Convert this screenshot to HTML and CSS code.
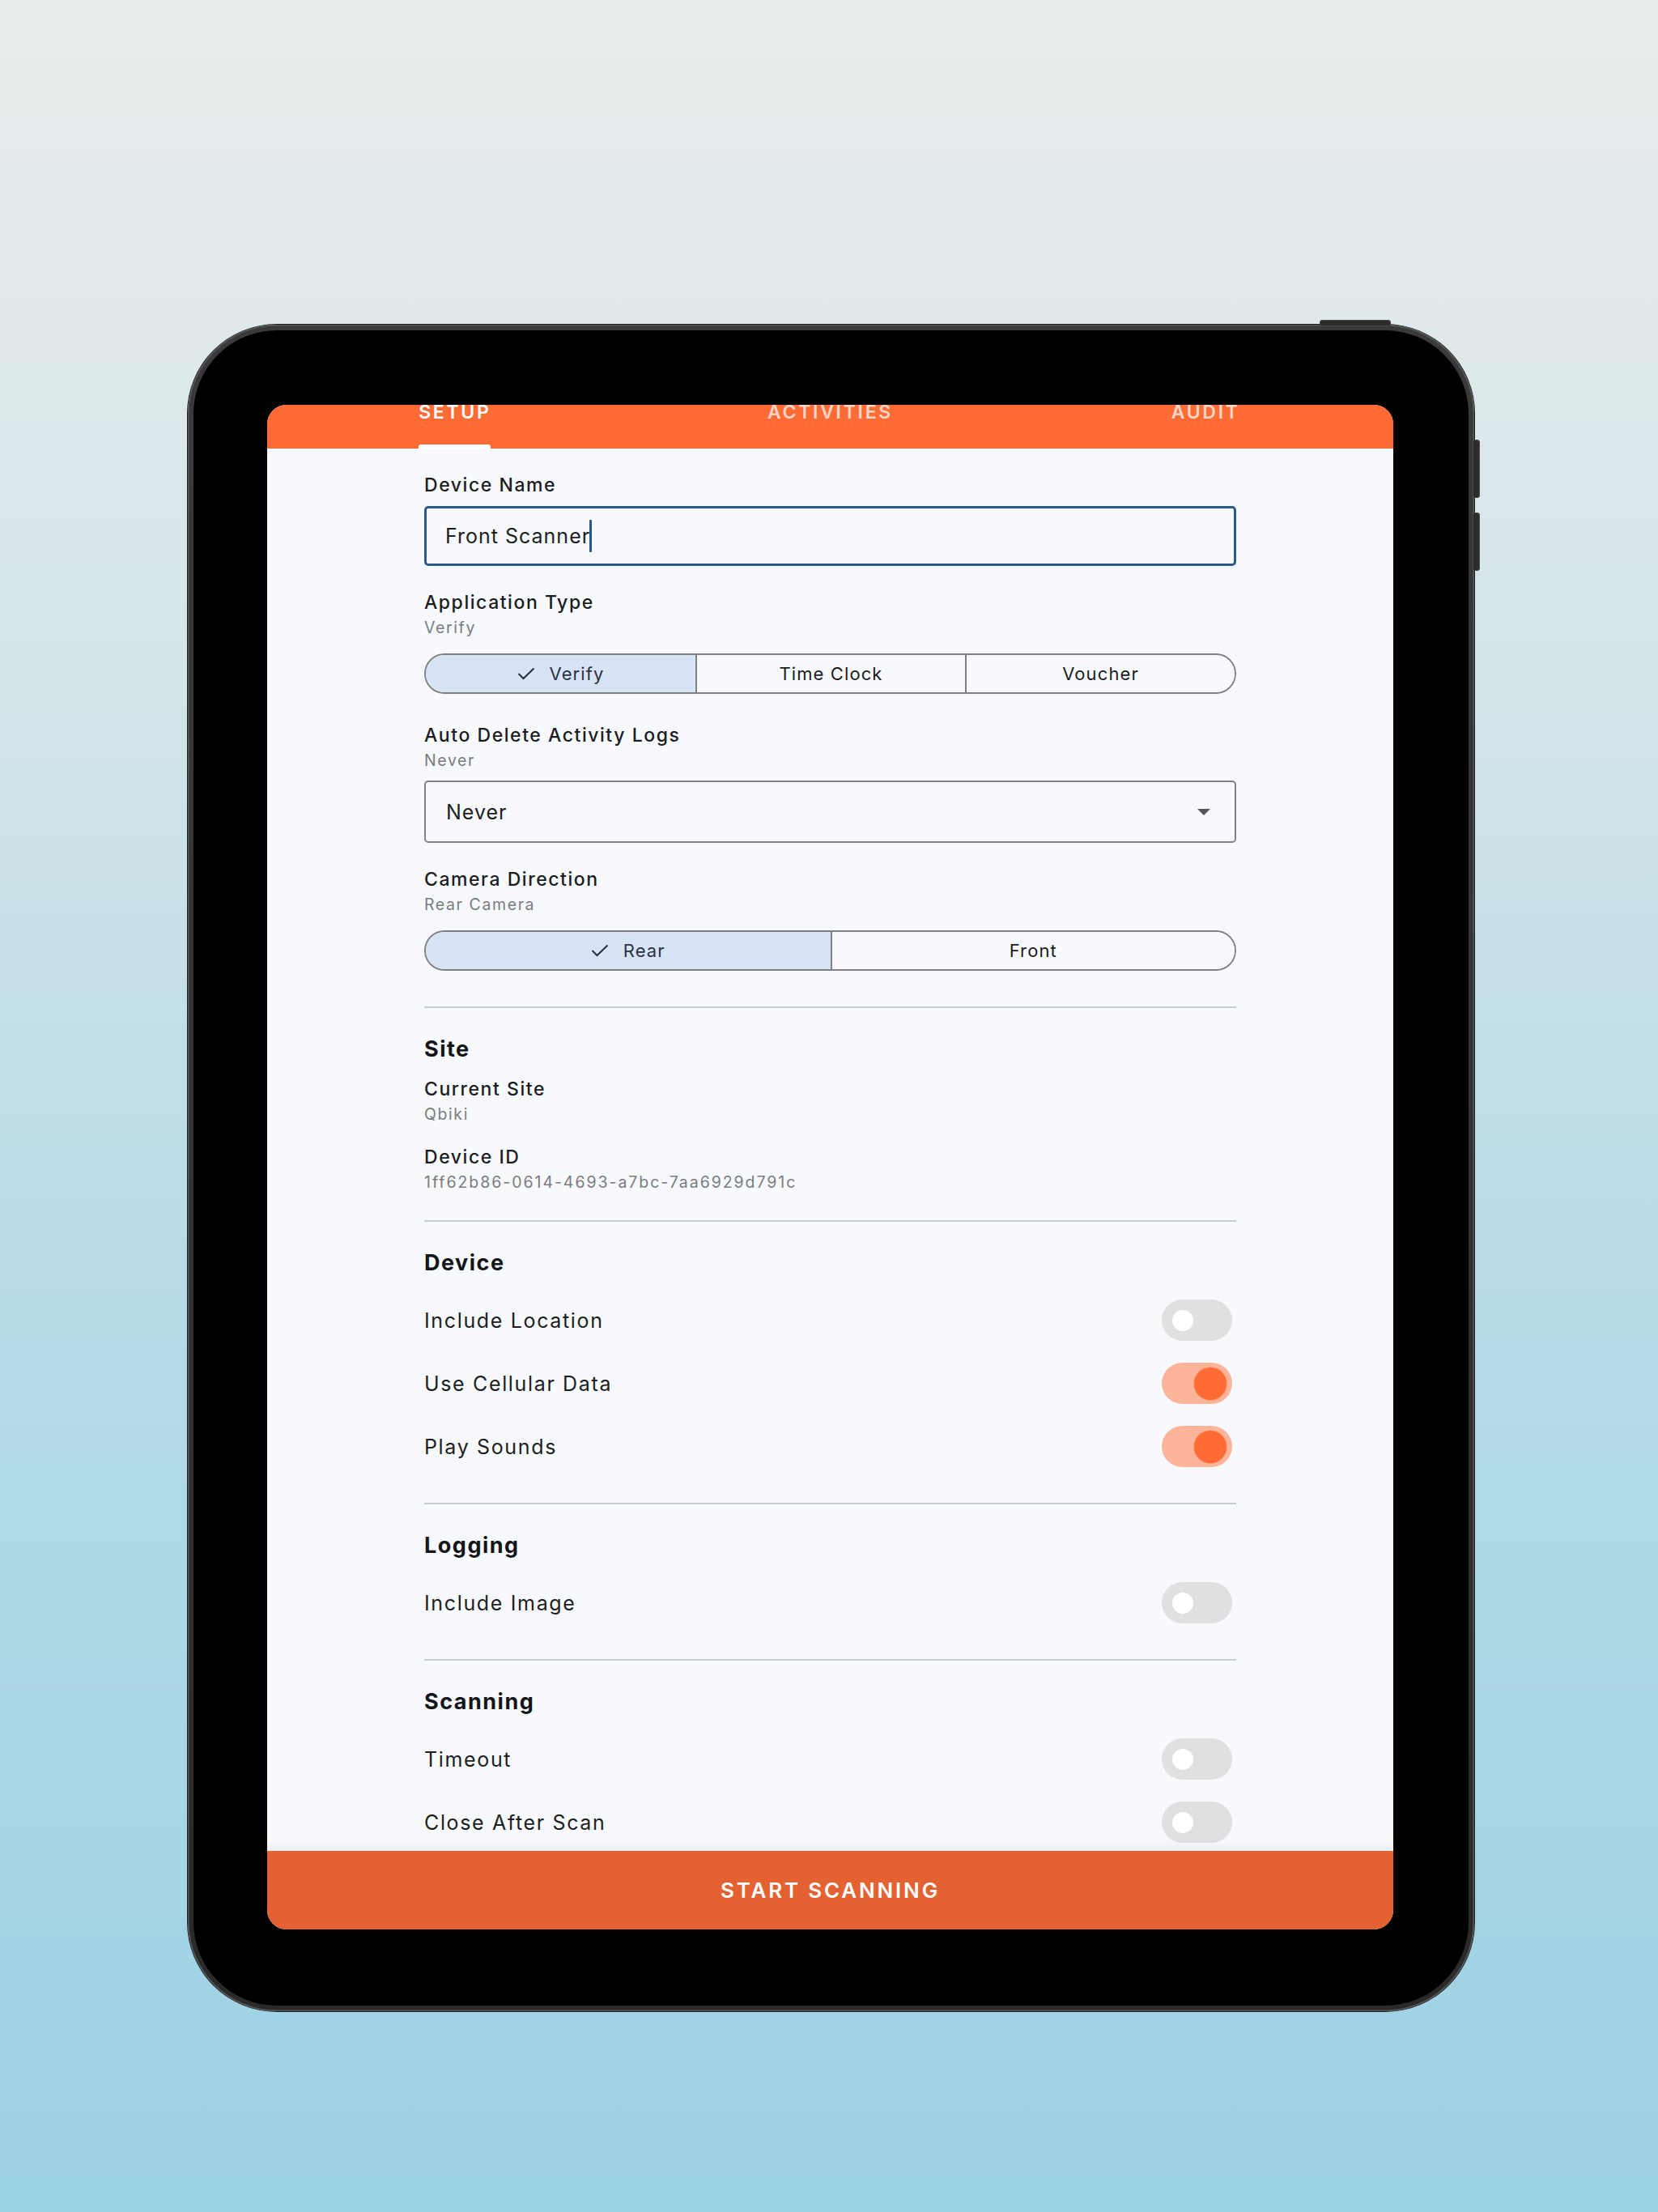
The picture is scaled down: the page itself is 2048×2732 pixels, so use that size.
FILE: index.html
```html
<!DOCTYPE html>
<html lang="en">
<head>
<meta charset="utf-8">
<title>Setup</title>
<link rel="stylesheet" href="styles.css">
</head>
<body>
<div class="stage">
  <div class="device">
    <span class="hw-btn hw-top"></span>
    <span class="hw-btn hw-side hw-up"></span>
    <span class="hw-btn hw-side hw-down"></span>
    <div class="bezel">
      <div class="screen">
        <nav class="tabs">
          <div class="tab active"><span>SETUP</span></div>
          <div class="tab"><span>ACTIVITIES</span></div>
          <div class="tab"><span>AUDIT</span></div>
        </nav>

        <main class="content">
          <div class="form">
            <section class="field field-first">
              <div class="label">Device Name</div>
              <div class="input"><span class="input-text">Front Scanner</span><span class="caret"></span></div>
            </section>

            <section class="field after-input">
              <div class="label">Application Type</div>
              <div class="sub">Verify</div>
              <div class="seg seg-3">
                <div class="seg-item selected">
                  <svg class="check" width="22" height="16" viewBox="0 0 22 16"><path d="M1.5 8 L7.5 14 L20.5 1.5" fill="none" stroke="#2a2f37" stroke-width="2"/></svg>
                  <span>Verify</span>
                </div>
                <div class="seg-item"><span>Time Clock</span></div>
                <div class="seg-item"><span>Voucher</span></div>
              </div>
            </section>

            <section class="field after-seg">
              <div class="label">Auto Delete Activity Logs</div>
              <div class="sub">Never</div>
              <div class="select">
                <span class="select-text">Never</span>
                <svg width="16" height="8" viewBox="0 0 16 8"><path d="M0 0 L16 0 L8 8 Z" fill="#555659"/></svg>
              </div>
            </section>

            <section class="field after-select">
              <div class="label">Camera Direction</div>
              <div class="sub">Rear Camera</div>
              <div class="seg seg-2">
                <div class="seg-item selected">
                  <svg class="check" width="22" height="16" viewBox="0 0 22 16"><path d="M1.5 8 L7.5 14 L20.5 1.5" fill="none" stroke="#2a2f37" stroke-width="2"/></svg>
                  <span>Rear</span>
                </div>
                <div class="seg-item"><span>Front</span></div>
              </div>
            </section>

            <hr class="divider">

            <section class="group">
              <h2 class="group-title">Site</h2>
              <div class="label info-first">Current Site</div>
              <div class="sub">Qbiki</div>
              <div class="label info-next">Device ID</div>
              <div class="sub sub-id">1ff62b86-0614-4693-a7bc-7aa6929d791c</div>
            </section>

            <hr class="divider divider-info">

            <section class="group">
              <h2 class="group-title">Device</h2>
              <ul class="rows">
                <li class="row"><span class="row-label">Include Location</span><span class="switch"><span class="knob"></span></span></li>
                <li class="row"><span class="row-label">Use Cellular Data</span><span class="switch on"><span class="knob"></span></span></li>
                <li class="row"><span class="row-label">Play Sounds</span><span class="switch on"><span class="knob"></span></span></li>
              </ul>
            </section>

            <hr class="divider">

            <section class="group">
              <h2 class="group-title">Logging</h2>
              <ul class="rows">
                <li class="row"><span class="row-label">Include Image</span><span class="switch"><span class="knob"></span></span></li>
              </ul>
            </section>

            <hr class="divider">

            <section class="group">
              <h2 class="group-title">Scanning</h2>
              <ul class="rows">
                <li class="row"><span class="row-label">Timeout</span><span class="switch"><span class="knob"></span></span></li>
                <li class="row"><span class="row-label">Close After Scan</span><span class="switch"><span class="knob"></span></span></li>
                <li class="row"><span class="row-label">Vibrate</span><span class="switch"><span class="knob"></span></span></li>
              </ul>
            </section>
          </div>
        </main>

        <footer class="action"><span>START SCANNING</span></footer>
      </div>
    </div>
  </div>
</div>
</body>
</html>
```

FILE: styles.css
```css
* { box-sizing: border-box; }

html, body {
  margin: 0;
  padding: 0;
}

body {
  width: 2048px;
  height: 2732px;
  overflow: hidden;
  background: linear-gradient(180deg, #eaeded 0%, #d4e5e9 30%, #b5dbe7 60%, #9bd1e4 100%);
  font-family: Inter, "Noto Sans", "Liberation Sans", sans-serif;
}

.stage {
  padding: 401px 0 0 232px;
}

/* ---------- device frame ---------- */
.device {
  position: relative;
  width: 1589px;
  height: 2083px;
  border-radius: 110px;
  padding: 7px;
  background: linear-gradient(180deg, #3a3a3a, #2a2a2a);
  box-shadow: inset 0 0 0 1.5px #565656, 0 0 0 1px #1e1e1e;
}

.hw-btn {
  position: absolute;
  background: #2c2c2c;
  border: 1px solid #4a4a4a;
}

.hw-top {
  left: 1398px;
  top: -6px;
  width: 88px;
  height: 8px;
  border-radius: 3px 3px 0 0;
}

.hw-side {
  right: -7px;
  width: 9px;
  height: 72px;
  border-radius: 0 3px 3px 0;
}

.hw-up { top: 142px; }
.hw-down { top: 232px; }

.bezel {
  width: 100%;
  height: 100%;
  border-radius: 103px;
  background: #000;
  padding: 92px 93px 94px 91px;
}

.screen {
  width: 100%;
  height: 100%;
  border-radius: 24px;
  overflow: hidden;
  background: #f7f9fd;
  display: flex;
  flex-direction: column;
}

/* ---------- tabs ---------- */
.tabs {
  flex: none;
  height: 54px;
  background: #ff6b35;
  display: grid;
  grid-template-columns: repeat(3, 1fr);
}

.tab {
  justify-self: center;
  height: 54px;
  display: flex;
  flex-direction: column;
  justify-content: space-between;
  font-weight: 600;
  font-size: 23px;
  line-height: 20px;
  letter-spacing: 2.7px;
  color: rgba(255, 255, 255, 0.72);
}

.tab span {
  margin-top: -1px;
}

.tab.active {
  color: #ffffff;
}

.tab.active::after {
  content: "";
  height: 5px;
  background: #ffffff;
  border-radius: 3px 3px 0 0;
}

/* ---------- content ---------- */
.content {
  flex: 1;
  min-height: 0;
  overflow: hidden;
}

.form {
  width: 1003px;
  margin: 0 auto;
  padding-top: 31px;
}

.field.after-input { margin-top: 31px; }
.field.after-seg { margin-top: 37px; }
.field.after-select { margin-top: 31px; }

.label {
  font-weight: 500;
  font-size: 23px;
  line-height: 28px;
  letter-spacing: 1.55px;
  color: #1b1c1f;
}

.sub {
  margin-top: 5px;
  font-weight: 400;
  font-size: 19.5px;
  line-height: 24px;
  letter-spacing: 1.6px;
  color: #7b7c80;
}

.sub-id {
  letter-spacing: 1.95px;
}

.input {
  margin-top: 12px;
  height: 74px;
  border: 3px solid #2c5a8a;
  border-radius: 5px;
  display: flex;
  align-items: center;
  padding-left: 23px;
}

.input-text {
  font-size: 25px;
  letter-spacing: 1px;
  color: #1d1e21;
}

.caret {
  width: 3px;
  height: 40px;
  background: #2c5a8a;
  border-radius: 1px;
  margin-left: -1px;
}

/* segmented */
.seg {
  margin-top: 20px;
  height: 50px;
  border: 2px solid #7f8084;
  border-radius: 25px;
  overflow: hidden;
  display: grid;
}

.seg-3 { grid-template-columns: repeat(3, 1fr); }
.seg-2 { grid-template-columns: repeat(2, 1fr); }

.seg-item {
  display: flex;
  align-items: center;
  justify-content: center;
  gap: 18px;
  font-size: 22px;
  letter-spacing: 1.1px;
  color: #1b1c1f;
  background: #f8f9fc;
}

.seg-item + .seg-item {
  border-left: 2px solid #7f8084;
}

.seg-item.selected {
  background: #d8e3f5;
  color: #283243;
}

/* select */
.select {
  margin-top: 13px;
  height: 77px;
  border: 2px solid #808185;
  border-radius: 5px;
  display: flex;
  align-items: center;
  justify-content: space-between;
  padding: 0 30px 0 25px;
}

.select-text {
  font-size: 25px;
  letter-spacing: 1px;
  color: #1d1e21;
}

/* dividers & groups */
.divider {
  margin: 44px 0 0;
  height: 2px;
  border: 0;
  background: #c8cbd0;
}

.divider-info { margin-top: 35px; }

.group-title {
  margin: 35px 0 0;
  font-weight: 700;
  font-size: 27px;
  line-height: 32px;
  letter-spacing: 1.5px;
  color: #141518;
}

.info-first { margin-top: 19px; }
.info-next { margin-top: 27px; }

.rows {
  list-style: none;
  margin: 29px 0 0;
  padding: 0;
  display: flex;
  flex-direction: column;
  gap: 27px;
}

.row {
  height: 51px;
  display: flex;
  align-items: center;
  justify-content: space-between;
  padding-right: 5px;
}

.row-label {
  font-size: 25px;
  letter-spacing: 1.65px;
  color: #1d1e21;
}

.switch {
  width: 87px;
  height: 51px;
  border-radius: 26px;
  background: #e0e0e0;
  display: flex;
  align-items: center;
  padding-left: 13px;
}

.switch .knob {
  width: 26px;
  height: 26px;
  border-radius: 50%;
  background: #ffffff;
}

.switch.on {
  background: #fcb49a;
  justify-content: flex-end;
  padding: 0 7px 0 0;
}

.switch.on .knob {
  width: 40px;
  height: 40px;
  background: #ff6b35;
  box-shadow: 0 0 0 1px rgba(255, 140, 100, 0.6);
}

/* bottom action */
.action {
  flex: none;
  height: 97px;
  background: #e46132;
  display: flex;
  align-items: center;
  justify-content: center;
  position: relative;
  box-shadow: 0 -4px 12px rgba(0, 0, 0, 0.07);
  font-weight: 600;
  font-size: 26px;
  letter-spacing: 2.8px;
  color: #ffffff;
}
```
